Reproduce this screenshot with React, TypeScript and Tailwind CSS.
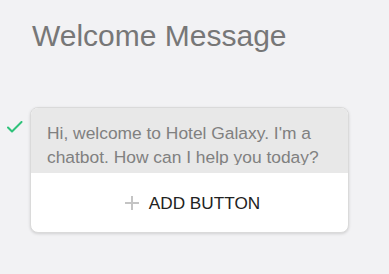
export default function App() {
  return (
    <div className="min-h-screen bg-[#f2f2f4] pt-[18px] font-['Liberation_Sans',Arial,sans-serif]">
      <h1 className="pl-8 text-[30px] leading-9 text-[#777777]">Welcome Message</h1>

      <div className="mt-[53px] flex">
        {/* status check */}
        <div className="w-[30px] pl-[7px] pt-[14px]">
          <svg width="16" height="13" viewBox="0 0 16 13" fill="none">
            <path d="M1 6.5 L5 10.5 L14.5 1" stroke="#2fc27a" strokeWidth="2" strokeLinecap="round" strokeLinejoin="round" />
          </svg>
        </div>

        <div className="w-[319px] overflow-hidden rounded-lg border border-[#dadada] bg-white shadow-[0_1px_3px_rgba(0,0,0,0.14)]">
          <div className="h-[65px] bg-[#e8e8e8] px-4 pt-[13px]">
            <p className="h-[44px] overflow-hidden text-[17.4px] leading-6 text-[#808080]">
              Hi, welcome to Hotel Galaxy. I'm a chatbot. How can I help you today?
            </p>
          </div>
          <button className="flex h-[59px] w-full items-center justify-center gap-[10px] pl-[6px]">
            <svg width="14" height="14" viewBox="0 0 14 14" fill="none">
              <path d="M7 0 V14 M0 7 H14" stroke="#c4c4c4" strokeWidth="2" />
            </svg>
            <span className="text-[17.2px] leading-6 text-[#222222]">ADD BUTTON</span>
          </button>
        </div>
      </div>
    </div>
  );
}
